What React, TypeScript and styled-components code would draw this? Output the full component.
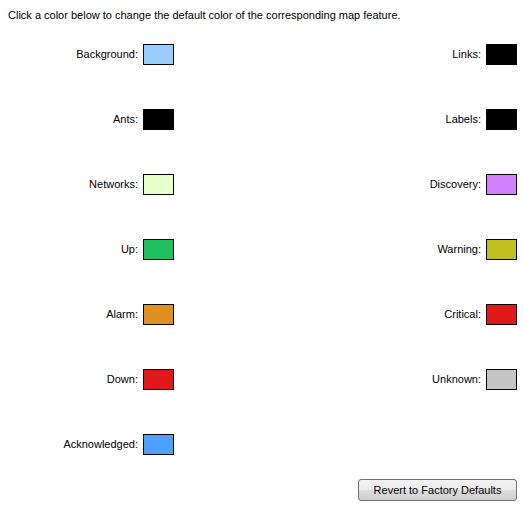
import React from "react";
import styled, { createGlobalStyle } from "styled-components";

const Global = createGlobalStyle`
  html, body { margin: 0; padding: 0; background: #ffffff; }
  body { font-family: Tahoma, "DejaVu Sans", "Liberation Sans", sans-serif; }
`;

const Page = styled.div`
  width: 524px;
  box-sizing: border-box;
  padding: 8px 7px 0 8px;
  font-family: "Liberation Sans", Arial, sans-serif;
  font-size: 11px;
  color: #000;
`;

const Intro = styled.div`
  line-height: 14px;
  height: 14px;
`;

const Grid = styled.div`
  display: grid;
  grid-template-columns: 166px 1fr;
  grid-auto-rows: 65px;
`;

const Item = styled.div`
  display: flex;
  align-items: center;
  justify-content: flex-end;
  gap: 5px;
`;

const Label = styled.span`
  line-height: 14px;
  margin-top: -1px;
`;

const Swatch = styled.div<{ $c: string }>`
  width: 31px;
  height: 21px;
  box-sizing: border-box;
  border: 1px solid #000;
  background: ${(p) => p.$c};
`;

const Footer = styled.div`
  display: flex;
  justify-content: flex-end;
  margin-top: 2px;
`;

const Button = styled.button`
  width: 159px;
  height: 22px;
  box-sizing: border-box;
  border: 1px solid #707070;
  border-radius: 3px;
  background: linear-gradient(#f2f2f2 0%, #ebebeb 48%, #dddddd 52%, #cfcfcf 100%);
  font-family: "Liberation Sans", Arial, sans-serif;
  font-size: 11px;
  color: #000;
  padding: 0;
  cursor: default;
`;

const left: [string, string][] = [
  ["Background", "#99ccff"],
  ["Ants", "#000000"],
  ["Networks", "#e6ffc8"],
  ["Up", "#20c060"],
  ["Alarm", "#e09020"],
  ["Down", "#e01818"],
  ["Acknowledged", "#4da0ff"],
];

const right: [string, string][] = [
  ["Links", "#000000"],
  ["Labels", "#000000"],
  ["Discovery", "#d080ff"],
  ["Warning", "#c0c020"],
  ["Critical", "#e01818"],
  ["Unknown", "#c4c4c4"],
];

export default function App() {
  const cells: React.ReactNode[] = [];
  for (let i = 0; i < 7; i++) {
    const l = left[i];
    const r = right[i];
    cells.push(
      <Item key={"l" + i}>
        <Label>{l[0]}:</Label>
        <Swatch $c={l[1]} />
      </Item>
    );
    cells.push(
      <Item key={"r" + i}>
        {r && (
          <>
            <Label>{r[0]}:</Label>
            <Swatch $c={r[1]} />
          </>
        )}
      </Item>
    );
  }
  return (
    <Page>
      <Global />
      <Intro>Click a color below to change the default color of the corresponding map feature.</Intro>
      <Grid>{cells}</Grid>
      <Footer>
        <Button>Revert to Factory Defaults</Button>
      </Footer>
    </Page>
  );
}
